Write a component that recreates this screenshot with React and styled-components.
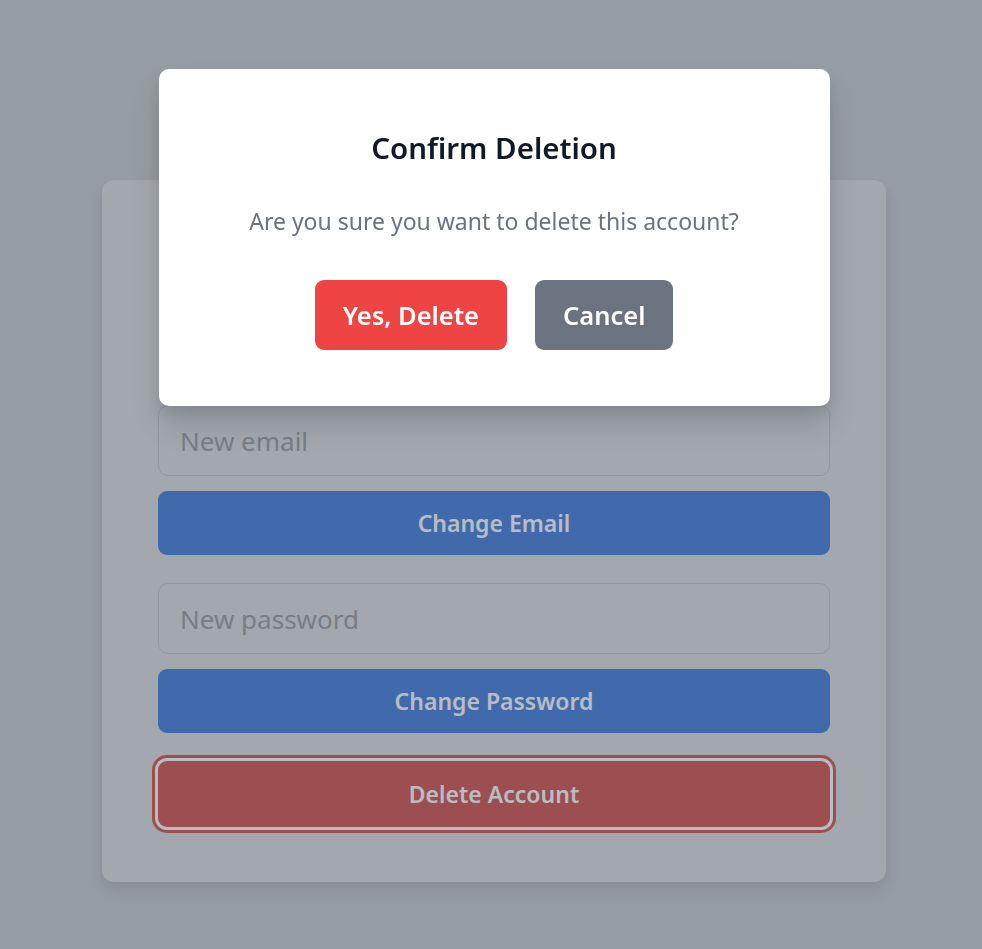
import React from "react";
import styled, { createGlobalStyle } from "styled-components";

const GlobalStyle = createGlobalStyle`
  * { box-sizing: border-box; }
  body {
    margin: 0;
    background: #c9cdd2;
    font-family: "Noto Sans", "Liberation Sans", sans-serif;
  }
`;

const Page = styled.div`
  min-height: 100vh;
  display: flex;
  justify-content: center;
  align-items: flex-start;
  padding: 180px 0 0 6px;
`;

const Card = styled.div`
  width: 784px;
  background: #dddee0;
  border-radius: 12px;
  padding: 56px 56px 55px;
  box-shadow: 0 10px 20px rgba(0, 0, 0, 0.08), 0 4px 8px rgba(0, 0, 0, 0.05);
`;

const Heading = styled.h2`
  margin: 0 0 129px;
  font-size: 30px;
  line-height: 40px;
  font-weight: 700;
  text-align: center;
  color: #1f2937;
`;

const Form = styled.div`
  display: flex;
  flex-direction: column;
  gap: 28px;
`;

const Group = styled.div`
  display: flex;
  flex-direction: column;
  gap: 15px;
`;

const Input = styled.input`
  height: 71px;
  width: 100%;
  padding: 0 21px;
  border: 1px solid #c3c5c9;
  border-radius: 10px;
  background: transparent;
  font-family: inherit;
  font-size: 26px;
  color: #374151;
  outline: none;
  &::placeholder {
    color: #9b9da4;
  }
`;

const WideButton = styled.button`
  height: ${(p) => p.$h || 64}px;
  width: 100%;
  border: none;
  border-radius: 9px;
  background: ${(p) => p.$bg};
  color: #fff;
  font-family: inherit;
  font-size: 23px;
  font-weight: 600;
  box-shadow: ${(p) => (p.$ring ? `0 0 0 3px #ffffff, 0 0 0 6px ${p.$ring}` : "none")};
`;

const Overlay = styled.div`
  position: fixed;
  inset: 0;
  background: rgba(55, 65, 81, 0.35);
  display: flex;
  justify-content: center;
  align-items: flex-start;
  padding: 69px 0 0 6px;
`;

const Modal = styled.div`
  width: 671px;
  background: #fff;
  border-radius: 10px;
  padding: 59px 40px 56px;
  text-align: center;
  box-shadow: 0 20px 30px rgba(0, 0, 0, 0.12), 0 8px 12px rgba(0, 0, 0, 0.08);
`;

const Title = styled.h3`
  margin: 0;
  font-size: 29.5px;
  line-height: 40px;
  font-weight: 600;
  color: #111827;
`;

const Message = styled.p`
  margin: 37px 0 0;
  font-size: 23px;
  line-height: 32px;
  color: #6b7280;
`;

const Actions = styled.div`
  display: flex;
  justify-content: center;
  gap: 28px;
  margin-top: 43px;
`;

const ModalButton = styled.button`
  height: 70px;
  padding: 0 28px;
  border: none;
  border-radius: 9px;
  background: ${(p) => p.$bg};
  color: #fff;
  font-family: inherit;
  font-size: 25.5px;
  font-weight: 600;
`;

export default function App() {
  return (
    <>
      <GlobalStyle />
      <Page>
        <Card>
          <Heading>Account Settings</Heading>
          <Form>
            <Group>
              <Input type="email" placeholder="New email" />
              <WideButton $bg="#4680dc">Change Email</WideButton>
            </Group>
            <Group>
              <Input type="password" placeholder="New password" />
              <WideButton $bg="#4680dc">Change Password</WideButton>
            </Group>
            <WideButton $bg="#d55552" $h={66} $ring="#d55552">
              Delete Account
            </WideButton>
          </Form>
        </Card>
      </Page>
      <Overlay>
        <Modal>
          <Title>Confirm Deletion</Title>
          <Message>Are you sure you want to delete this account?</Message>
          <Actions>
            <ModalButton $bg="#ef4444">Yes, Delete</ModalButton>
            <ModalButton $bg="#6b7280">Cancel</ModalButton>
          </Actions>
        </Modal>
      </Overlay>
    </>
  );
}
